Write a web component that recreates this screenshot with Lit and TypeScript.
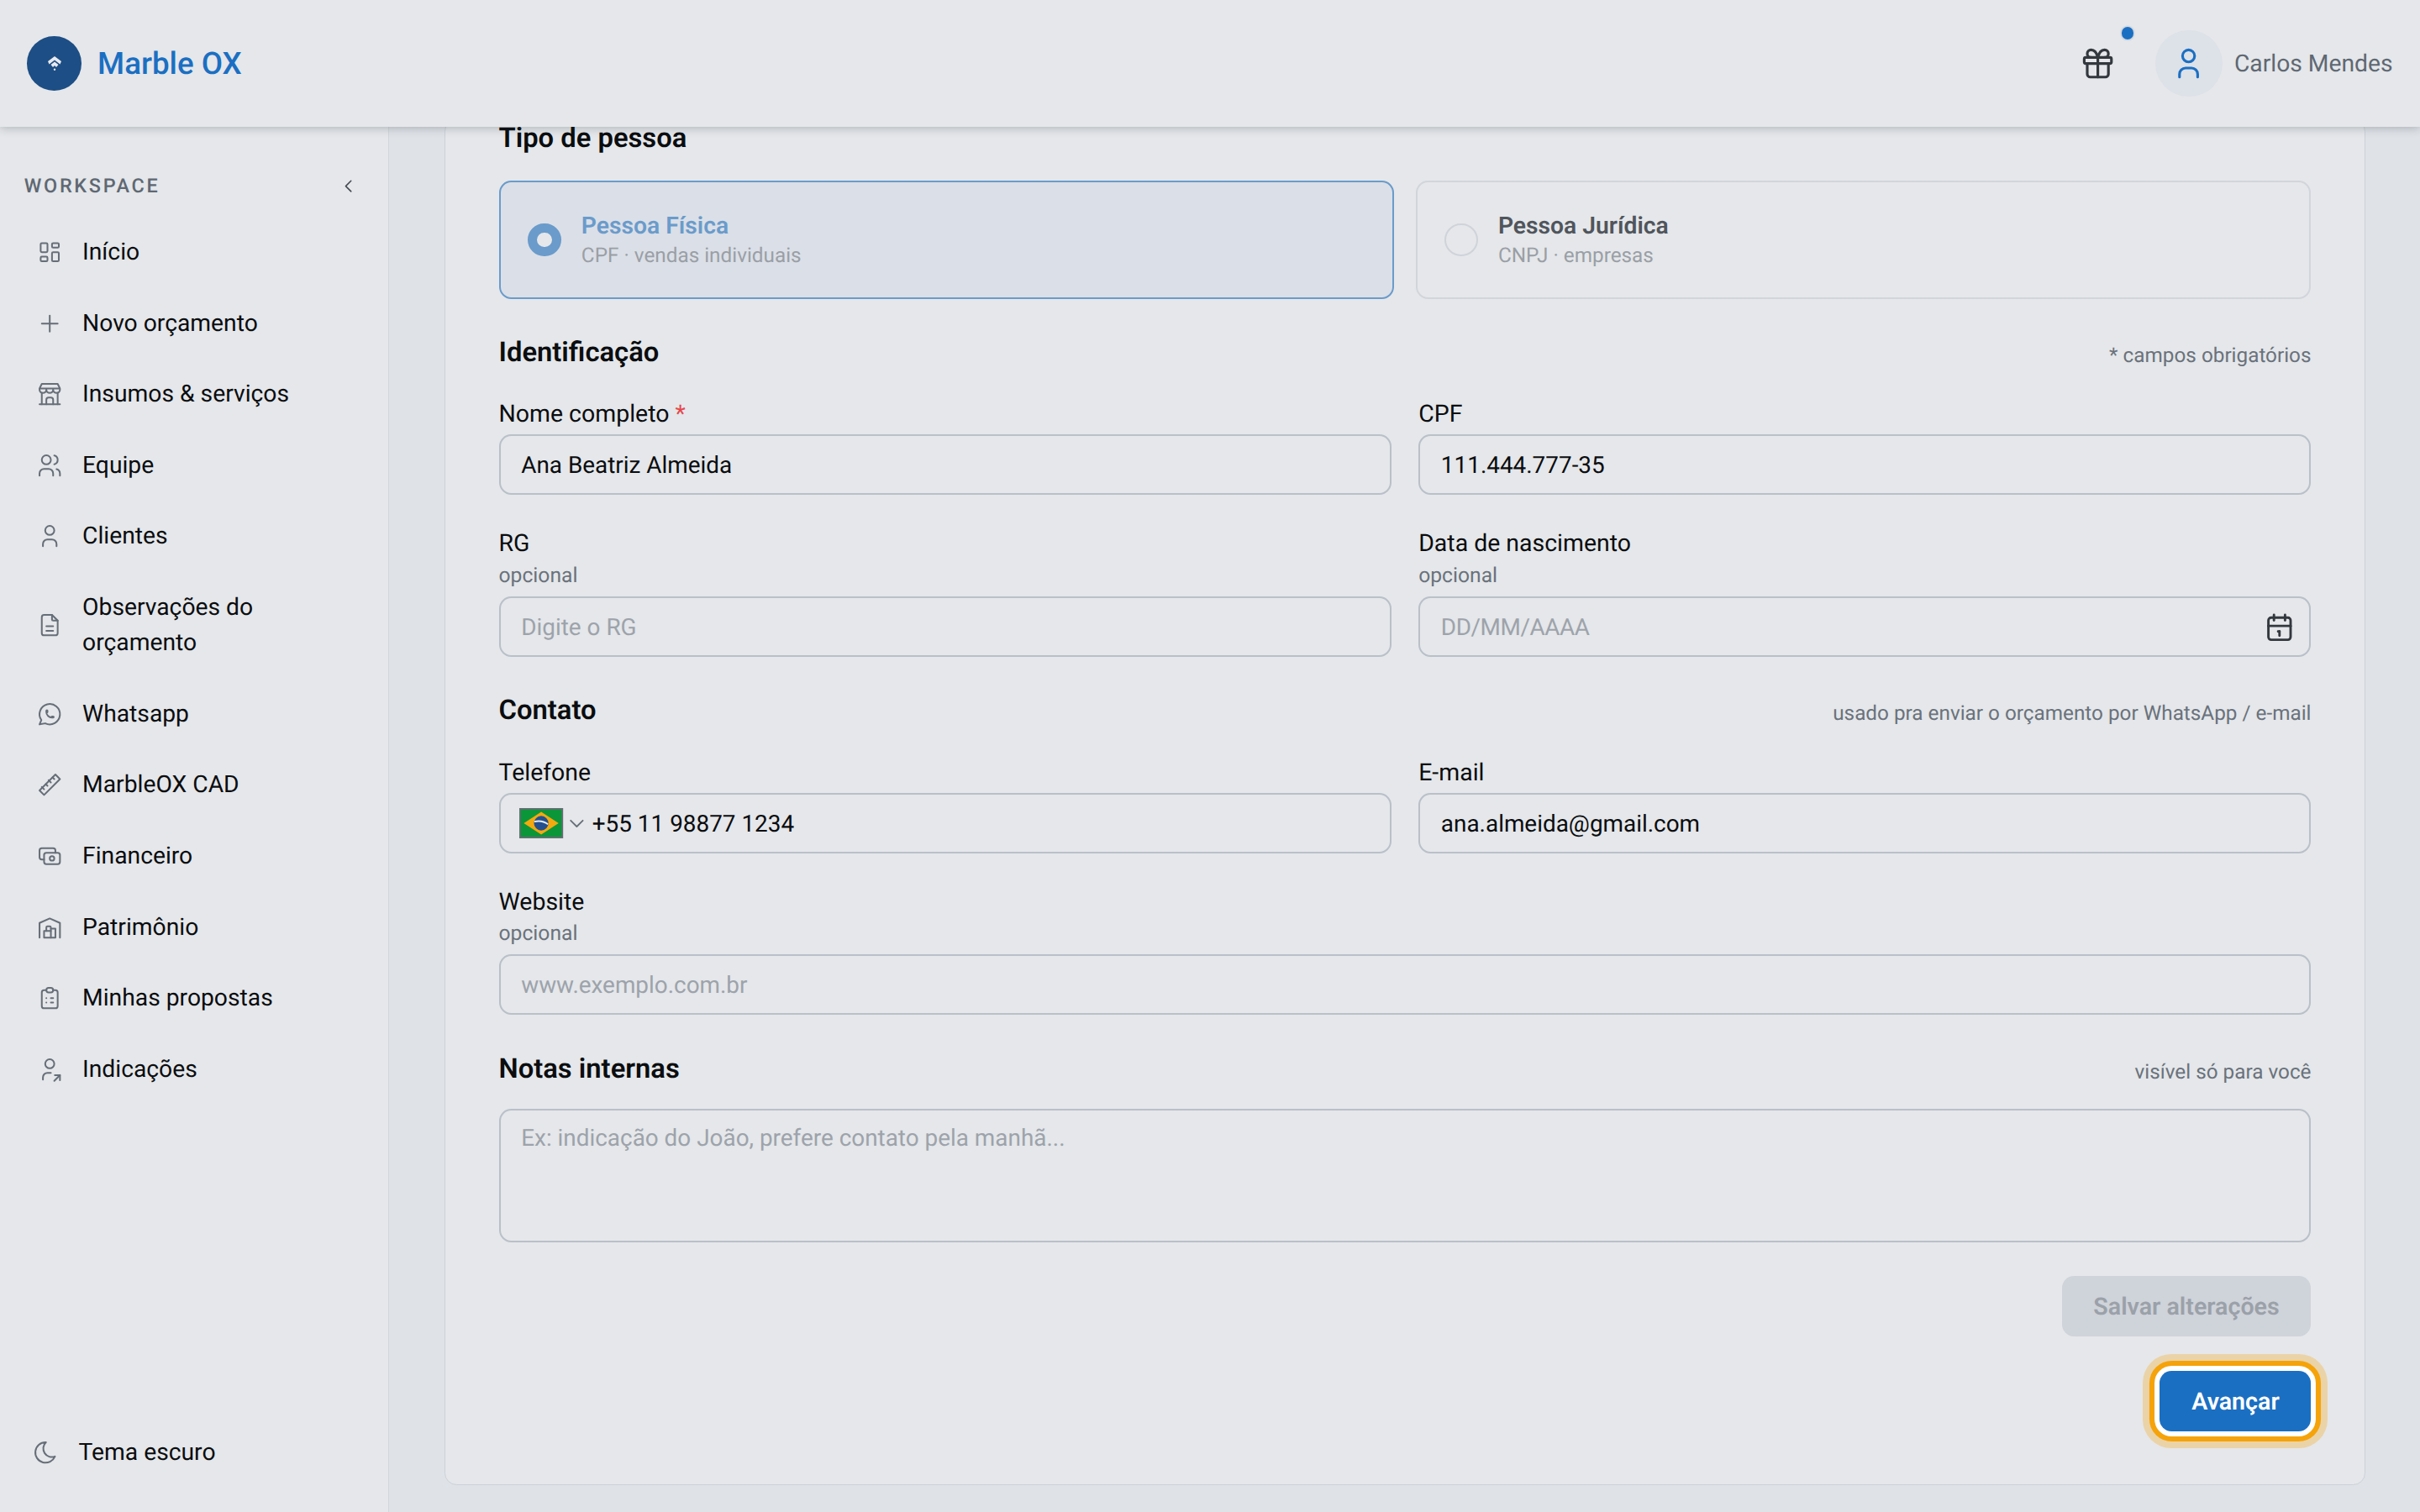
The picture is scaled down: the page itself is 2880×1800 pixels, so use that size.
import { LitElement, html, svg, css } from "lit";
import { customElement } from "lit/decorators.js";

// tabler style outlines, 24 box
const ICONS: Record<string, string[]> = {
  home: [
    "M5 4h4a1 1 0 0 1 1 1v6a1 1 0 0 1 -1 1h-4a1 1 0 0 1 -1 -1v-6a1 1 0 0 1 1 -1",
    "M5 16h4a1 1 0 0 1 1 1v2a1 1 0 0 1 -1 1h-4a1 1 0 0 1 -1 -1v-2a1 1 0 0 1 1 -1",
    "M15 12h4a1 1 0 0 1 1 1v6a1 1 0 0 1 -1 1h-4a1 1 0 0 1 -1 -1v-6a1 1 0 0 1 1 -1",
    "M15 4h4a1 1 0 0 1 1 1v2a1 1 0 0 1 -1 1h-4a1 1 0 0 1 -1 -1v-2a1 1 0 0 1 1 -1",
  ],
  plus: ["M12 5v14", "M5 12h14"],
  store: [
    "M3 21h18",
    "M3 7v1a3 3 0 0 0 6 0v-1m0 1a3 3 0 0 0 6 0v-1m0 1a3 3 0 0 0 6 0v-1h-18l2 -4h14l2 4",
    "M5 21v-10.15",
    "M19 21v-10.15",
    "M9 21v-4a2 2 0 0 1 2 -2h2a2 2 0 0 1 2 2v4",
  ],
  users: [
    "M5 7a4 4 0 1 0 8 0a4 4 0 1 0 -8 0",
    "M3 21v-2a4 4 0 0 1 4 -4h4a4 4 0 0 1 4 4v2",
    "M16 3.13a4 4 0 0 1 0 7.75",
    "M21 21v-2a4 4 0 0 0 -3 -3.85",
  ],
  user: ["M8 7a4 4 0 1 0 8 0a4 4 0 0 0 -8 0", "M6 21v-2a4 4 0 0 1 4 -4h4a4 4 0 0 1 4 4v2"],
  file: [
    "M14 3v4a1 1 0 0 0 1 1h4",
    "M17 21h-10a2 2 0 0 1 -2 -2v-14a2 2 0 0 1 2 -2h7l5 5v11a2 2 0 0 1 -2 2z",
    "M9 17h6",
    "M9 13h6",
  ],
  whatsapp: [
    "M3 21l1.65 -3.8a9 9 0 1 1 3.4 2.9l-5.05 .9",
    "M9 10a.5 .5 0 0 0 1 0v-1a.5 .5 0 0 0 -1 0v1a5 5 0 0 0 5 5h1a.5 .5 0 0 0 0 -1h-1a.5 .5 0 0 0 0 1",
  ],
  ruler: ["M17 3l4 4l-14 14l-4 -4z", "M16 7l-1.5 -1.5", "M13 10l-2 -2", "M10 13l-1.5 -1.5", "M7 16l-2 -2"],
  cash: [
    "M7 11a2 2 0 0 1 2 -2h10a2 2 0 0 1 2 2v6a2 2 0 0 1 -2 2h-10a2 2 0 0 1 -2 -2z",
    "M12 14a2 2 0 1 0 4 0a2 2 0 1 0 -4 0",
    "M17 9v-2a2 2 0 0 0 -2 -2h-10a2 2 0 0 0 -2 2v6a2 2 0 0 0 2 2h2",
  ],
  warehouse: [
    "M3 21v-13l9 -4l9 4v13",
    "M13 13h4v8h-10v-6h6",
    "M13 21v-9a1 1 0 0 0 -1 -1h-2a1 1 0 0 0 -1 1v3",
  ],
  clipboard: [
    "M9 5h-2a2 2 0 0 0 -2 2v12a2 2 0 0 0 2 2h10a2 2 0 0 0 2 -2v-12a2 2 0 0 0 -2 -2h-2",
    "M9 5a2 2 0 0 1 2 -2h2a2 2 0 0 1 2 2a2 2 0 0 1 -2 2h-2a2 2 0 0 1 -2 -2z",
    "M9 12h.01",
    "M13 12h2",
    "M9 16h.01",
    "M13 16h2",
  ],
  share: [
    "M8 7a4 4 0 1 0 8 0a4 4 0 0 0 -8 0",
    "M6 21v-2a4 4 0 0 1 4 -4h3",
    "M16 22l5 -5",
    "M21 21.5v-4.5h-4.5",
  ],
  moon: ["M12 3c.132 0 .263 0 .393 0a7.5 7.5 0 0 0 7.92 12.446a9 9 0 1 1 -8.313 -12.454z"],
  gift: [
    "M3 9a1 1 0 0 1 1 -1h16a1 1 0 0 1 1 1v2a1 1 0 0 1 -1 1h-16a1 1 0 0 1 -1 -1z",
    "M12 8v13",
    "M19 12v7a2 2 0 0 1 -2 2h-10a2 2 0 0 1 -2 -2v-7",
    "M7.5 8a2.5 2.5 0 0 1 0 -5a4.8 8 0 0 1 4.5 5a4.8 8 0 0 1 4.5 -5a2.5 2.5 0 0 1 0 5",
  ],
  calendar: [
    "M4 7a2 2 0 0 1 2 -2h12a2 2 0 0 1 2 2v12a2 2 0 0 1 -2 2h-12a2 2 0 0 1 -2 -2z",
    "M16 3v4",
    "M8 3v4",
    "M4 11h16",
    "M11 15h1",
    "M12 15v3",
  ],
  left: ["M15 6l-6 6l6 6"],
  down: ["M6 9l6 6l6 -6"],
};

function icon(name: string, cls = "") {
  return html`<svg class="ic ${cls}" viewBox="0 0 24 24">
    ${ICONS[name].map((d) => svg`<path d=${d}></path>`)}
  </svg>`;
}

const NAV = [
  ["home", "Início"],
  ["plus", "Novo orçamento"],
  ["store", "Insumos & serviços"],
  ["users", "Equipe"],
  ["user", "Clientes"],
  ["file", "Observações do orçamento"],
  ["whatsapp", "Whatsapp"],
  ["ruler", "MarbleOX CAD"],
  ["cash", "Financeiro"],
  ["warehouse", "Patrimônio"],
  ["clipboard", "Minhas propostas"],
  ["share", "Indicações"],
];

@customElement("app-root")
export class AppRoot extends LitElement {
  field(label: string, value: string, opts: { ph?: boolean; req?: boolean; sub?: boolean } = {}) {
    return html`<div class="field">
      <div class="label">${label}${opts.req ? html` <span class="req">*</span>` : ""}</div>
      ${opts.sub ? html`<div class="sub">opcional</div>` : ""}
      <div class="input ${opts.ph ? "ph" : ""}">${value}</div>
    </div>`;
  }

  render() {
    return html`
      <header class="top">
        <div class="brand">
          <span class="logo">
            <svg viewBox="0 0 18 18" width="10" height="10">
              <path fill="#e8ebef" d="M9 0L17 6 15.500 9.500 9 4.500 2.500 9.500 1 6z"></path>
              <path fill="#e8ebef" d="M9 6.500L13.500 10 11 13 9 11 7 13 4.500 10z"></path>
              <circle cx="9" cy="15.800" r="1.200" fill="#e8ebef"></circle>
            </svg>
          </span>
          <span class="brand-name">Marble OX</span>
        </div>
        <div class="account">
          <span class="gift">${icon("gift")}<span class="dot"></span></span>
          <span class="avatar">${icon("user")}</span>
          <span class="uname">Carlos Mendes</span>
        </div>
      </header>
      <div class="body">
        <aside class="side">
          <div class="side-head">
            <span class="ws">WORKSPACE</span>
            ${icon("left", "collapse")}
          </div>
          <nav>
            ${NAV.map(([ic, text]) => html`<a class="item">${icon(ic)}<span>${text}</span></a>`)}
          </nav>
          <a class="item theme">${icon("moon")}<span>Tema escuro</span></a>
        </aside>
        <main class="main">
          <section class="card">
            <div class="head first"><h2>Tipo de pessoa</h2></div>
            <div class="types">
              <div class="type on">
                <span class="radio"></span>
                <div class="t-text"><div class="t-name">Pessoa Física</div><div class="t-sub">CPF · vendas individuais</div></div>
              </div>
              <div class="type">
                <span class="radio"></span>
                <div class="t-text"><div class="t-name">Pessoa Jurídica</div><div class="t-sub">CNPJ · empresas</div></div>
              </div>
            </div>

            <div class="head"><h2>Identificação</h2><span class="hint">* campos obrigatórios</span></div>
            <div class="grid">
              ${this.field("Nome completo", "Ana Beatriz Almeida", { req: true })}
              ${this.field("CPF", "111.444.777-35")}
              ${this.field("RG", "Digite o RG", { ph: true, sub: true })}
              <div class="field">
                <div class="label">Data de nascimento</div>
                <div class="sub">opcional</div>
                <div class="input ph"><span class="date">DD/MM/AAAA</span> ${icon("calendar", "cal")}</div>
              </div>
            </div>

            <div class="head"><h2>Contato</h2><span class="hint">usado pra enviar o orçamento por WhatsApp / e-mail</span></div>
            <div class="grid">
              <div class="field">
                <div class="label">Telefone</div>
                <div class="input phone">
                  <svg class="flag" viewBox="0 0 29 20">
                    <rect x="0.500" y="0.500" width="28" height="19" fill="#0b9639" stroke="#666d75"></rect>
                    <path d="M14.500 2.500L26 10 14.500 17.500 3 10z" fill="#f4a90f"></path>
                    <circle cx="14.500" cy="10" r="4.800" fill="#24508f"></circle>
                    <path d="M9.900 9c3-.8 6.500-.2 9.100 1.700" fill="none" stroke="#e8ebef" stroke-width="1"></path>
                  </svg>
                  ${icon("down", "drop")}
                  <span>+55 11 98877 1234</span>
                </div>
              </div>
              ${this.field("E-mail", "ana.almeida@gmail.com")}
              <div class="field wide">
                <div class="label">Website</div>
                <div class="sub">opcional</div>
                <div class="input ph">www.exemplo.com.br</div>
              </div>
            </div>

            <div class="head notes"><h2>Notas internas</h2><span class="hint">visível só para você</span></div>
            <div class="input area ph">Ex: indicação do João, prefere contato pela manhã...</div>

            <div class="actions">
              <button class="save">Salvar alterações</button>
              <button class="next">Avançar</button>
            </div>
          </section>
        </main>
      </div>
    `;
  }

  static styles = css`
    :host {
      display: block;
      width: 1600px;
      height: 1000px;
      zoom: 1.8;
      overflow: hidden;
      background: #dfe2e7;
      color: #0b0d10;
      font-family: Roboto, "Noto Sans", sans-serif;
      font-size: 15.700px;
      text-rendering: geometricPrecision;
    }
    .ic {
      width: 18px;
      height: 18px;
      flex: none;
      fill: none;
      stroke: #666e78;
      stroke-width: 1.5;
      stroke-linecap: round;
      stroke-linejoin: round;
    }
    .top {
      position: relative;
      z-index: 2;
      height: 84px;
      display: flex;
      align-items: center;
      justify-content: space-between;
      padding: 0 18px;
      background: #e5e7ea;
      box-shadow: 0 1px 6px rgba(40, 50, 60, 0.3);
    }
    .brand {
      display: flex;
      align-items: center;
      gap: 10.500px;
    }
    .logo {
      width: 36px;
      height: 36px;
      border-radius: 50%;
      background: #1d4e85;
      display: flex;
      align-items: center;
      justify-content: center;
    }
    .brand-name {
      font-size: 20.400px;
      font-weight: 500;
      color: #1b6fc2;
    }
    .account {
      display: flex;
      align-items: center;
    }
    .gift {
      position: relative;
      display: flex;
      margin-right: 26px;
    }
    .gift .ic {
      width: 24px;
      height: 24px;
      stroke: #33383e;
      stroke-width: 1.75;
    }
    .dot {
      position: absolute;
      top: -12px;
      right: -11.500px;
      width: 8px;
      height: 8px;
      border-radius: 50%;
      background: #1b6fc2;
      box-shadow: 0 0 0 1px #d3d8e0;
    }
    .avatar {
      width: 44px;
      height: 44px;
      border-radius: 50%;
      background: #dde1e8;
      display: flex;
      align-items: center;
      justify-content: center;
      margin-right: 8px;
    }
    .avatar .ic {
      width: 24px;
      height: 24px;
      stroke: #1b6fc2;
      stroke-width: 1.75;
    }
    .uname {
      color: #5f6873;
      font-size: 15.700px;
    }
    .body {
      display: flex;
      height: 916px;
    }
    .side {
      width: 257px;
      flex: none;
      box-sizing: border-box;
      display: flex;
      flex-direction: column;
      background: #e5e7ea;
      border-right: 1px solid #d3d7dd;
      padding-bottom: 16px;
    }
    .side-head {
      display: flex;
      align-items: center;
      justify-content: space-between;
      padding: 32px 19px 13.300px 16px;
    }
    .ws {
      font-size: 13px;
      line-height: 14px;
      font-weight: 500;
      letter-spacing: 1.500px;
      color: #5f6873;
    }
    .collapse {
      width: 14px;
      height: 14px;
      stroke: #444a52;
    }
    nav {
      display: flex;
      flex-direction: column;
    }
    .item {
      display: flex;
      align-items: center;
      gap: 12.500px;
      padding: 11.750px 24px;
      line-height: 23.500px;
    }
    .theme {
      margin-top: auto;
      padding-left: 21px;
      gap: 13px;
    }
    .main {
      flex: 1;
      min-width: 0;
      display: flex;
      flex-direction: column;
      justify-content: flex-end;
      overflow: hidden;
      padding: 0 36px 18px 37px;
    }
    .card {
      flex: none;
      border: 1px solid #cdd2d9;
      border-radius: 8px;
      padding: 0 35.400px 35px 35.200px;
      background: #e5e7ea;
    }
    .head {
      display: flex;
      align-items: center;
      justify-content: space-between;
      height: 24px;
      margin: 23.700px 0 18.800px;
    }
    .head.first {
      margin: 0 0 16px;
    }
    .head.notes {
      margin-bottom: 14.500px;
    }
    h2 {
      margin: -1px 0 0;
      font-size: 18.200px;
      font-weight: 600;
    }
    .hint {
      margin-top: 3px;
      font-size: 13.500px;
      color: #6a727c;
    }
    .types {
      display: grid;
      grid-template-columns: 1fr 1fr;
      gap: 14px;
    }
    .type {
      height: 78px;
      box-sizing: border-box;
      display: flex;
      align-items: center;
      gap: 13.500px;
      padding: 0 18px;
      border: 1.120px solid #d2d5db;
      border-radius: 8px;
    }
    .type.on {
      background: #dbdfe7;
      border-color: #6a9bcb;
    }
    .radio {
      width: 22px;
      height: 22px;
      box-sizing: border-box;
      border-radius: 50%;
      border: 1.120px solid #d0d3da;
    }
    .on .radio {
      border: 6.500px solid #6a9bcb;
      background: #e5e7ea;
    }
    .t-text {
      margin-top: 0.500px;
    }
    .t-name {
      font-weight: 600;
      line-height: 20px;
      color: #50555c;
    }
    .on .t-name {
      color: #6a9bcb;
    }
    .t-sub {
      margin-top: 0.500px;
      font-size: 13.500px;
      line-height: 18px;
      color: #9a9fa6;
    }
    .grid {
      display: grid;
      grid-template-columns: 1fr 1fr;
      gap: 22.400px 18px;
    }
    .wide {
      grid-column: 1 / -1;
    }
    .label {
      font-size: 15.800px;
      line-height: 20px;
      margin-bottom: 3.300px;
    }
    .req {
      color: #e5484d;
    }
    .sub {
      font-size: 13.700px;
      line-height: 17px;
      margin: -0.400px 0 4.800px;
      color: #6a727c;
    }
    .input {
      height: 40px;
      box-sizing: border-box;
      display: flex;
      align-items: center;
      padding: 0.600px 14px 0 13.700px;
      border: 1.120px solid #b9c0c9;
      border-radius: 8px;
      font-size: 15.500px;
    }
    .ph {
      color: #9da3ab;
    }
    .date {
      letter-spacing: -0.250px;
    }
    .area {
      height: 88px;
      align-items: flex-start;
      padding-top: 9px;
    }
    .cal {
      width: 22px;
      height: 22px;
      margin-left: auto;
      margin-right: -5px;
      stroke: #33383e;
      stroke-width: 1.75;
    }
    .flag {
      width: 29px;
      height: 20px;
      flex: none;
      margin-left: -1px;
    }
    .drop {
      width: 16px;
      height: 16px;
      margin: 0 2px 0 1px;
    }
    .actions {
      display: flex;
      flex-direction: column;
      align-items: flex-end;
      gap: 22.500px;
      margin-top: 22.500px;
    }
    button {
      height: 40px;
      border: none;
      border-radius: 8px;
      padding: 0 21px;
      font: 600 15.900px Roboto, "Noto Sans", sans-serif;
      text-rendering: geometricPrecision;
    }
    .save {
      background: #cfd3da;
      color: #9ba1a9;
    }
    .next {
      background: #1b6fc2;
      color: #fff;
      box-shadow: 0 0 0 3.300px #fff, 0 0 0 6.700px #f5a30a, 0 0 0 11.100px #ebd3a8;
    }
  `;
}
